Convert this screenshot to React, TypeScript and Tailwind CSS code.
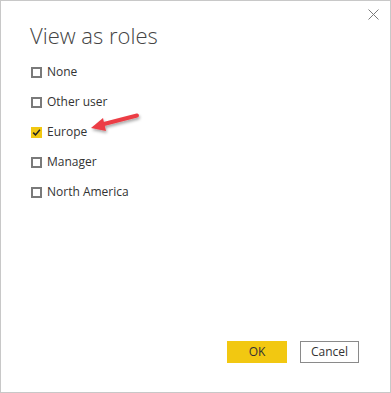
import React from "react";

const roles = [
  { name: "None", checked: false },
  { name: "Other user", checked: false },
  { name: "Europe", checked: true },
  { name: "Manager", checked: false },
  { name: "North America", checked: false },
];

function Checkbox({ checked }: { checked: boolean }) {
  if (checked) {
    return (
      <span className="grid h-[11px] w-[11px] place-items-center bg-[#f2c811]">
        <svg width="9" height="9" viewBox="0 0 9 9" fill="none">
          <path d="M1.2 4.6 L3.5 6.9 L7.9 1.8" stroke="#222" strokeWidth="1.5" />
        </svg>
      </span>
    );
  }
  return <span className="h-[11px] w-[11px] border-2 border-[#7a7a7a] bg-white" />;
}

export default function App() {
  return (
    <div
      className="relative flex h-[393px] w-[391px] flex-col border border-[#c8c8c8] bg-white text-[#333]"
      style={{ fontFamily: '"Segoe UI", "Open Sans", "Noto Sans", sans-serif' }}
    >
      <button type="button" className="absolute right-[11px] top-[8px] text-[#7a7a7a]" aria-label="Close">
        <svg width="11" height="11" viewBox="0 0 11 11">
          <path d="M0.5 0.5 L10.5 10.5 M10.5 0.5 L0.5 10.5" stroke="currentColor" strokeWidth="1" />
        </svg>
      </button>

      <div className="pl-[29px] pt-[19px] text-[22px] font-light leading-[31px] text-[#444]">View as roles</div>

      <ul className="mt-[6px] pl-[30px]">
        {roles.map((r) => (
          <li key={r.name} className="flex h-[30px] items-center gap-[5px] text-[12px]">
            <Checkbox checked={r.checked} />
            <span>{r.name}</span>
          </li>
        ))}
      </ul>

      {/* red callout arrow */}
      <svg className="absolute left-[86px] top-[108px]" width="60" height="32" viewBox="0 0 60 32">
        <defs>
          <filter id="sh" x="-20%" y="-20%" width="140%" height="160%">
            <feDropShadow dx="1" dy="2" stdDeviation="1.5" floodColor="#000" floodOpacity="0.35" />
          </filter>
        </defs>
        <g filter="url(#sh)">
          <path d="M15 15.5 L50 6.5" stroke="#ec3e45" strokeWidth="4" strokeLinecap="round" />
          <path d="M4 19 L16 9 L19 22 Z" fill="#ec3e45" />
        </g>
      </svg>

      <div className="mt-auto flex justify-end gap-[13px] pb-[29px] pr-[31px]">
        <button type="button" className="h-[22px] w-[60px] bg-[#f2c811] text-[12px] text-[#333]">
          OK
        </button>
        <button type="button" className="h-[22px] w-[59px] border border-[#8a8a8a] bg-white text-[12px] text-[#333]">
          Cancel
        </button>
      </div>
    </div>
  );
}
